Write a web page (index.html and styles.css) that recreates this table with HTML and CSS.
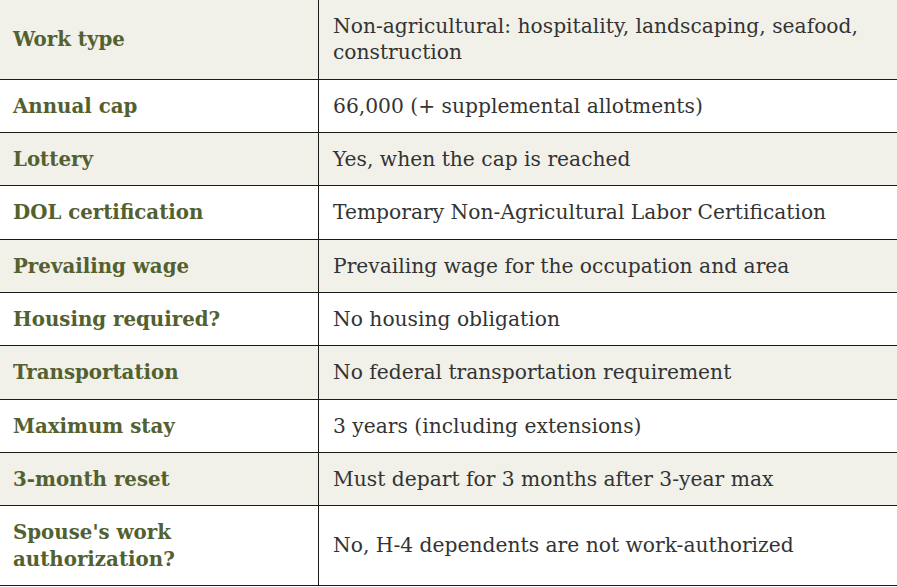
FILE: index.html
```html
<!DOCTYPE html>
<html lang="en">
<head>
<meta charset="utf-8">
<title>H-2B overview</title>
<link rel="stylesheet" href="styles.css">
</head>
<body>
<table class="facts">
  <tbody>
    <tr><th>Work type</th><td>Non-agricultural: hospitality, landscaping, seafood, construction</td></tr>
    <tr><th>Annual cap</th><td>66,000 (+ supplemental allotments)</td></tr>
    <tr><th>Lottery</th><td>Yes, when the cap is reached</td></tr>
    <tr><th>DOL certification</th><td>Temporary Non-Agricultural Labor Certification</td></tr>
    <tr><th>Prevailing wage</th><td>Prevailing wage for the occupation and area</td></tr>
    <tr><th>Housing required?</th><td>No housing obligation</td></tr>
    <tr><th>Transportation</th><td>No federal transportation requirement</td></tr>
    <tr><th>Maximum stay</th><td>3 years (including extensions)</td></tr>
    <tr><th>3-month reset</th><td>Must depart for 3 months after 3-year max</td></tr>
    <tr><th>Spouse's work authorization?</th><td>No, H-4 dependents are not work-authorized</td></tr>
  </tbody>
</table>
</body>
</html>
```
FILE: styles.css
```css
html, body {
  margin: 0;
  padding: 0;
  background: #ffffff;
}
body {
  font-family: "DejaVu Serif", "Liberation Serif", serif;
  font-size: 20.25px;
  line-height: 26.5px;
  color: #333333;
}
.facts {
  width: 897px;
  border-collapse: collapse;
  table-layout: fixed;
}
.facts tr:nth-child(odd) {
  background: #f1f1ea;
}
.facts th,
.facts td {
  padding: 12.92px 15px;
  border-bottom: 1px solid #1a1a1a;
  vertical-align: middle;
  text-align: left;
}
.facts th {
  width: 290px;
  font-size: 19.8px;
  font-weight: bold;
  color: #536030;
  border-right: 1px solid #1a1a1a;
  padding-left: 13px;
}
.facts td {
  padding-left: 14px;
}
```
